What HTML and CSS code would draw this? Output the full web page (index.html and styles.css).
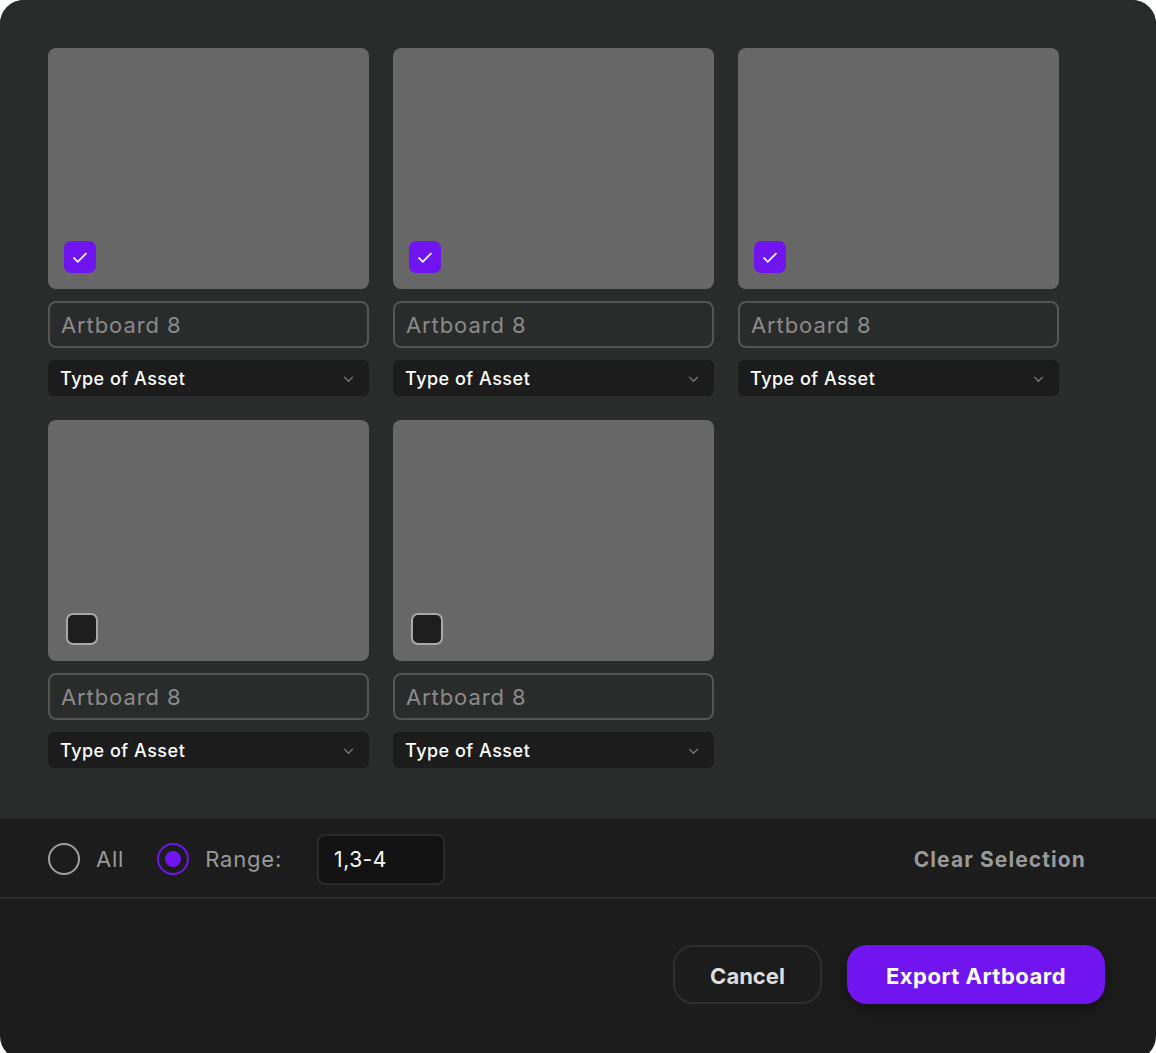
FILE: index.html
```html
<!DOCTYPE html>
<html lang="en">

<head>
    <meta charset="UTF-8">
    <meta name="viewport" content="width=device-width, initial-scale=1.0">
    <title>Export Artboards</title>
    <link rel="stylesheet" href="styles.css">
</head>

<body>
    <div class="dialog">
        <div class="board-grid">
            <div class="board">
                <div class="thumb"><span class="check is-on"><svg viewBox="0 0 16 16"><path d="M2.8 8.4l3.4 3.4 7-7" /></svg></span></div>
                <input class="board-name" type="text" placeholder="Artboard 8">
                <div class="asset-select">Type of Asset <svg viewBox="0 0 12 12"><path d="M2 4.5l4 4 4-4" /></svg></div>
            </div>
            <div class="board">
                <div class="thumb"><span class="check is-on"><svg viewBox="0 0 16 16"><path d="M2.8 8.4l3.4 3.4 7-7" /></svg></span></div>
                <input class="board-name" type="text" placeholder="Artboard 8">
                <div class="asset-select">Type of Asset <svg viewBox="0 0 12 12"><path d="M2 4.5l4 4 4-4" /></svg></div>
            </div>
            <div class="board">
                <div class="thumb"><span class="check is-on"><svg viewBox="0 0 16 16"><path d="M2.8 8.4l3.4 3.4 7-7" /></svg></span></div>
                <input class="board-name" type="text" placeholder="Artboard 8">
                <div class="asset-select">Type of Asset <svg viewBox="0 0 12 12"><path d="M2 4.5l4 4 4-4" /></svg></div>
            </div>
            <div class="board">
                <div class="thumb"><span class="check"></span></div>
                <input class="board-name" type="text" placeholder="Artboard 8">
                <div class="asset-select">Type of Asset <svg viewBox="0 0 12 12"><path d="M2 4.5l4 4 4-4" /></svg></div>
            </div>
            <div class="board">
                <div class="thumb"><span class="check"></span></div>
                <input class="board-name" type="text" placeholder="Artboard 8">
                <div class="asset-select">Type of Asset <svg viewBox="0 0 12 12"><path d="M2 4.5l4 4 4-4" /></svg></div>
            </div>
        </div>

        <div class="range-bar">
            <label class="radio"><span class="radio-dot"></span>All</label>
            <label class="radio is-on"><span class="radio-dot"></span>Range:</label>
            <input class="range-input" type="text" value="1,3-4">
            <button class="btn-clear" type="button">Clear Selection</button>
        </div>

        <div class="actions">
            <button class="btn-cancel" type="button">Cancel</button>
            <button class="btn-export" type="button">Export Artboard</button>
        </div>
    </div>
</body>

</html>
```

FILE: styles.css
```css
* {
    box-sizing: border-box;
}

body {
    margin: 0;
    background-color: #fff;
    font-family: Inter, "Noto Sans", sans-serif;
}

.dialog {
    width: 1156px;
    height: 1060px;
    border-radius: 24px;
    overflow: hidden;
    background-color: #1c1c1c;
}

.board-grid {
    display: grid;
    grid-template-columns: repeat(3, 321px);
    gap: 24px;
    padding: 48px 48px 51px;
    background-color: #2a2b2b;
}

.board {
    display: flex;
    flex-direction: column;
    gap: 12px;
}

.thumb {
    display: flex;
    align-items: flex-end;
    height: 241px;
    padding: 0 0 16px 16px;
    border-radius: 8px;
    background-color: #676767;
}

.check {
    display: flex;
    align-items: center;
    justify-content: center;
    width: 32px;
    height: 32px;
    margin: 0 0 0 2px;
    border: 2px solid #a8a8a8;
    border-radius: 7px;
    background-color: #1e1e1e;
}

.check.is-on {
    margin: 0;
    border: none;
    background-color: #7014f0;
}

.check svg {
    width: 20px;
    height: 20px;
    fill: none;
    stroke: #fff;
    stroke-width: 1.4;
}

.board-name {
    height: 47px;
    padding: 0 11px;
    border: 2px solid #555;
    border-radius: 8px;
    background-color: transparent;
    font-family: inherit;
    font-size: 22px;
    letter-spacing: 0.9px;
    color: #ddd;
    outline: none;
}

.board-name::placeholder {
    color: #8a8a8a;
}

.asset-select {
    display: flex;
    align-items: center;
    justify-content: space-between;
    height: 36px;
    padding: 0 14px 0 12px;
    border-radius: 6px;
    background-color: #1c1c1c;
    font-size: 18px;
    font-weight: 500;
    letter-spacing: 0.5px;
    color: #fff;
}

.asset-select svg {
    width: 13px;
    height: 13px;
    fill: none;
    stroke: #777;
    stroke-width: 1.3;
}

.range-bar {
    display: flex;
    align-items: center;
    height: 80px;
    padding: 2px 70px 0 48px;
    border-bottom: 2px solid #2c2c2c;
}

.radio {
    display: flex;
    align-items: center;
    gap: 16px;
    margin-right: 33px;
    font-size: 22px;
    letter-spacing: 0.8px;
    color: #999;
}

.radio.is-on {
    margin-right: 35px;
}

.radio-dot {
    display: flex;
    align-items: center;
    justify-content: center;
    width: 32px;
    height: 32px;
    border: 2px solid #a0a0a0;
    border-radius: 50%;
}

.radio.is-on .radio-dot {
    border-color: #7014f0;
}

.radio.is-on .radio-dot::after {
    content: "";
    width: 16px;
    height: 16px;
    border-radius: 50%;
    background-color: #7014f0;
}

.range-input {
    width: 128px;
    height: 51px;
    padding: 0 15px;
    border: 2px solid #2a2a2a;
    border-radius: 8px;
    background-color: #121212;
    font-family: inherit;
    font-size: 21px;
    letter-spacing: 0.5px;
    color: #fff;
    outline: none;
}

.btn-clear {
    margin-left: auto;
    padding: 0;
    border: none;
    background: none;
    font-family: inherit;
    font-size: 21px;
    font-weight: 700;
    letter-spacing: 1.1px;
    color: #999;
    cursor: pointer;
}

.actions {
    display: flex;
    justify-content: flex-end;
    gap: 25px;
    padding: 46px 51px 0 0;
}

.actions button {
    height: 59px;
    padding-top: 3px;
    border-radius: 20px;
    font-family: inherit;
    font-size: 22px;
    font-weight: 700;
    cursor: pointer;
}

.btn-cancel {
    width: 149px;
    border: 2px solid #2e2e2e;
    background-color: transparent;
    color: #ddd;
}

.btn-export {
    width: 258px;
    border: none;
    background-color: #7014f0;
    letter-spacing: 0.5px;
    color: #fff;
    box-shadow: 0 6px 14px rgba(0, 0, 0, 0.35);
}
```
